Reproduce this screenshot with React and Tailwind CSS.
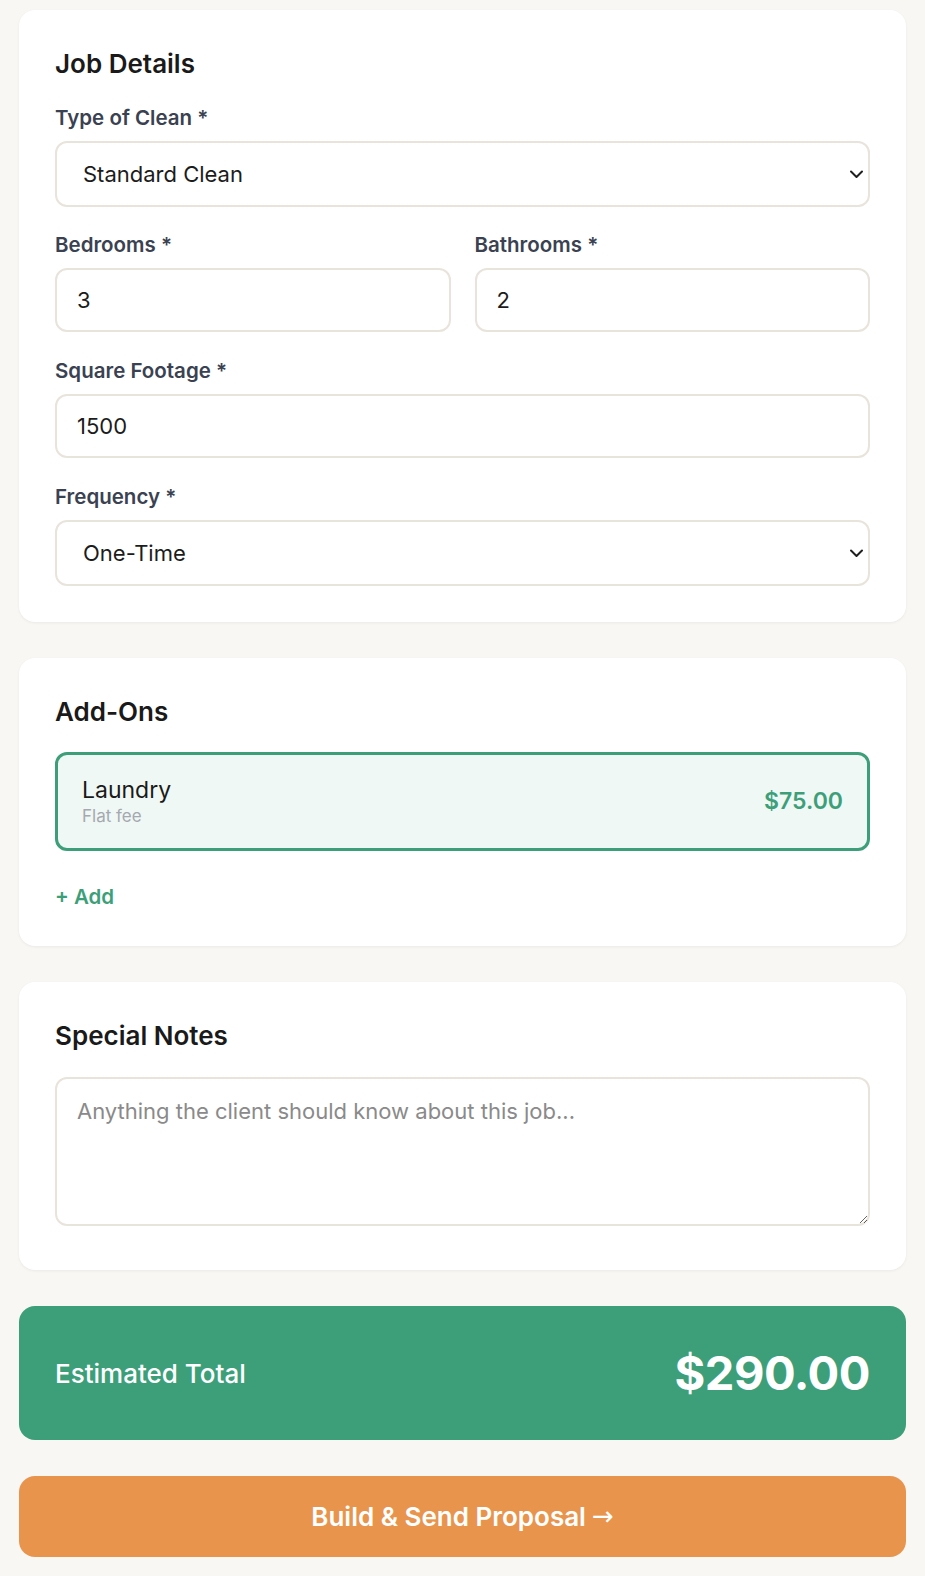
import React from "react";

const font = { fontFamily: "Inter, 'Open Sans', sans-serif" };

function Label({ children }) {
  return (
    <div className="text-[20.5px] leading-[26px] font-semibold text-[#3a4252] mb-[10px]">
      {children}
    </div>
  );
}

function Chevron() {
  return (
    <svg className="absolute right-[6px] top-1/2 -translate-y-1/2 pointer-events-none" width="15" height="14" viewBox="0 0 15 14" fill="none">
      <path d="M2 4.5 L7.5 10 L13 4.5" stroke="#1f1f1f" strokeWidth="2" strokeLinecap="round" strokeLinejoin="round" />
    </svg>
  );
}

function Select({ value }) {
  return (
    <div className="relative">
      <select
        defaultValue={value}
        className="w-full h-[66px] appearance-none rounded-[12px] border-2 border-[#e8e4db] bg-white pl-[26px] pr-[40px] text-[22px] text-[#1c1c1c] outline-none"
        style={font}
      >
        <option>{value}</option>
      </select>
      <Chevron />
    </div>
  );
}

function Input({ value }) {
  return (
    <input
      defaultValue={value}
      className="w-full h-[64px] rounded-[12px] border-2 border-[#e8e4db] bg-white px-[20px] text-[22px] text-[#1c1c1c] outline-none"
      style={font}
    />
  );
}

function Card({ children }) {
  return (
    <div className="bg-white rounded-[16px] shadow-[0_1px_3px_rgba(0,0,0,0.06)] px-[36px] pt-[36px] pb-[36px]">
      {children}
    </div>
  );
}

function Heading({ children }) {
  return <h2 className="mt-[2px] text-[26px] leading-[32px] font-semibold text-[#1a1a1a]">{children}</h2>;
}

export default function App() {
  return (
    <div className="min-h-[1576px] bg-[#f8f7f4] pt-[10px] px-[19px] pb-[19px] flex flex-col gap-[36px]" style={font}>
      <Card>
        <Heading>Job Details</Heading>
        <div className="mt-[25px]">
          <Label>Type of Clean *</Label>
          <Select value="Standard Clean" />
        </div>
        <div className="mt-[25px] grid grid-cols-2 gap-[24px]">
          <div>
            <Label>Bedrooms *</Label>
            <Input value="3" />
          </div>
          <div>
            <Label>Bathrooms *</Label>
            <Input value="2" />
          </div>
        </div>
        <div className="mt-[26px]">
          <Label>Square Footage *</Label>
          <Input value="1500" />
        </div>
        <div className="mt-[26px]">
          <Label>Frequency *</Label>
          <Select value="One-Time" />
        </div>
      </Card>

      <Card>
        <Heading>Add-Ons</Heading>
        <div className="mt-[24px] h-[99px] rounded-[12px] border-[3px] border-[#3d9f7a] bg-[#eff8f4] px-[24px] flex items-center justify-between">
          <div>
            <div className="text-[23px] leading-[28px] text-[#1a1a1a]">Laundry</div>
            <div className="text-[17px] leading-[22px] text-[#a6a8b0] mt-[1px]">Flat fee</div>
          </div>
          <div className="text-[23px] font-semibold text-[#3d9f7a]">$75.00</div>
        </div>
        <div className="mt-[33px] text-[20.5px] leading-[26px] font-semibold text-[#3d9f7a]">+ Add</div>
      </Card>

      <Card>
        <Heading>Special Notes</Heading>
        <textarea
          placeholder="Anything the client should know about this job..."
          className="mt-[25px] mb-[8px] block w-full h-[149px] rounded-[12px] border-2 border-[#e8e4db] bg-white px-[20px] py-[18px] text-[22px] leading-[28px] text-[#1c1c1c] placeholder:text-[#8a8a8a] outline-none resize-y"
          style={font}
        />
      </Card>

      <div className="h-[134px] rounded-[16px] bg-[#3d9f7a] px-[36px] flex items-center justify-between">
        <div className="text-[26px] font-medium text-white">Estimated Total</div>
        <div className="text-[47px] font-bold text-white tracking-[-0.5px]">$290.00</div>
      </div>

      <button className="h-[81px] rounded-[16px] bg-[#e9944c] text-white text-[26px] font-semibold flex items-center justify-center" style={font}>
        Build &amp; Send Proposal
        <span className="ml-[6px] font-normal" style={{ fontFamily: "'DejaVu Sans', sans-serif" }}>→</span>
      </button>
    </div>
  );
}
